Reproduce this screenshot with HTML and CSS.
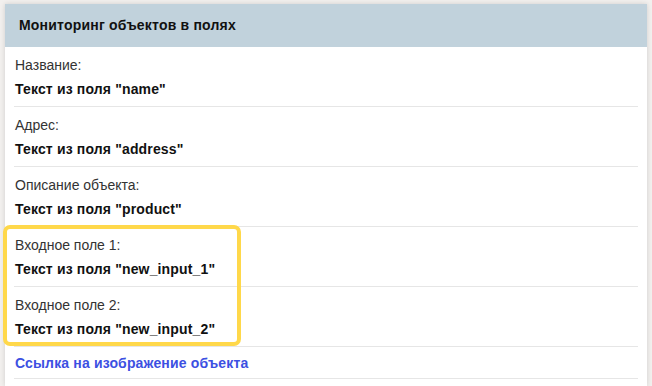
FILE: index.html
```html
<!DOCTYPE html>
<html lang="ru">
<head>
  <meta charset="UTF-8">
  <title>Мониторинг объектов в полях</title>
  <link rel="stylesheet" href="styles.css">
</head>
<body>
  <div class="card">
    <div class="card-header">Мониторинг объектов в полях</div>
    <div class="card-body">
      <div class="field">
        <div class="field-label">Название:</div>
        <div class="field-value">Текст из поля "name"</div>
      </div>
      <div class="field">
        <div class="field-label">Адрес:</div>
        <div class="field-value">Текст из поля "address"</div>
      </div>
      <div class="field">
        <div class="field-label">Описание объекта:</div>
        <div class="field-value">Текст из поля "product"</div>
      </div>
      <!-- новые поля, выделены рамкой -->
      <div class="highlight-group">
        <div class="field">
          <div class="field-label">Входное поле 1:</div>
          <div class="field-value">Текст из поля "new_input_1"</div>
        </div>
        <div class="field">
          <div class="field-label">Входное поле 2:</div>
          <div class="field-value">Текст из поля "new_input_2"</div>
        </div>
        <div class="highlight-frame"></div>
      </div>
      <div class="field field-link">
        <a class="object-link" href="#">Ссылка на изображение объекта</a>
      </div>
    </div>
  </div>
</body>
</html>
```

FILE: styles.css
```css
body {
    margin: 0;
    padding: 4px 5px 0 5px;
    background: #f2f0ee;
    font-family: "Liberation Sans", Arial, sans-serif;
    font-size: 14px;
    color: #222;
    height: 382px;
    overflow: hidden;
}
.card {
    background: #fff;
    height: 100%;
    box-shadow: 0 0 5px rgba(0, 0, 0, 0.14);
}
.card-header {
    background: #c1d2dc;
    height: 43px;
    line-height: 43px;
    padding-left: 14px;
    font-weight: bold;
    letter-spacing: 0.2px;
    color: #111;
}
.card-body {
    padding: 0 9px;
}
.field {
    padding: 6px 0 5px 1px;
    border-bottom: 1px solid #e6e6e6;
    line-height: 24px;
}
.field-label {
    color: #333;
}
.field-value {
    font-weight: bold;
    letter-spacing: 0.15px;
    color: #111;
}
.highlight-group {
    position: relative;
}
.highlight-frame {
    position: absolute;
    left: -11px;
    top: -2px;
    width: 238px;
    height: 121px;
    border: 4px solid #ffd84a;
    border-radius: 7px;
    box-sizing: border-box;
}
.field-link {
    padding: 4px 0 3px 1px;
}
.object-link {
    color: #3c50e2;
    font-weight: bold;
    letter-spacing: 0.15px;
    text-decoration: none;
}
```
